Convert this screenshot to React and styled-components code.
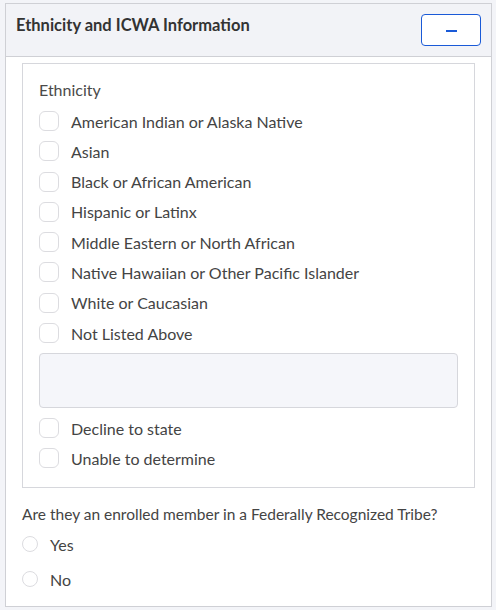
import React from "react";
import styled, { createGlobalStyle } from "styled-components";

const Global = createGlobalStyle`
  html, body { margin: 0; padding: 0; background: #f3f4f8; }
  body { font-family: Lato, "Open Sans", sans-serif; color: #444; }
  * { box-sizing: border-box; }
`;

const Page = styled.div`
  padding: 3px 4px 3px 5px;
`;

const Card = styled.section`
  border: 1px solid #cfd0d5;
  background: #fff;
  height: 604px;
  display: flex;
  flex-direction: column;
`;

const Header = styled.header`
  display: flex;
  align-items: flex-start;
  justify-content: space-between;
  height: 53px;
  padding: 10px 10px 0 10px;
  background: #f2f3f7;
  border-bottom: 1px solid #cfd0d5;
`;

const Title = styled.h2`
  margin: 0;
  font-size: 16.5px;
  line-height: 22px;
  font-weight: 700;
  color: #333;
`;

const CollapseButton = styled.button`
  width: 60px;
  height: 32px;
  background: #fff;
  border: 1px solid #1a5ad7;
  border-radius: 4px;
  display: flex;
  align-items: center;
  justify-content: center;
  padding: 0;
  cursor: pointer;
`;

const Minus = styled.span`
  display: block;
  width: 11px;
  height: 2px;
  background: #1a5ad7;
  margin-top: 1px;
`;

const Body = styled.div`
  padding: 6px 16px 0 16px;
`;

const Fieldset = styled.div`
  border: 1px solid #d6d7dc;
  padding: 16px;
  height: 425px;
`;

const GroupLabel = styled.div`
  font-size: 16px;
  line-height: 20px;
  color: #4a4a4a;
  margin-bottom: 11px;
`;

const CheckRow = styled.label`
  display: flex;
  align-items: center;
  gap: 12px;
  height: 20px;
  margin-bottom: ${(p) => (p.$last ? "0" : "10.3px")};
  font-size: 16px;
  color: #444;
`;

const Box = styled.span`
  width: 20px;
  height: 20px;
  flex: none;
  border: 1px solid #dcdce0;
  border-radius: 6px;
  background: #fff;
`;

const OtherText = styled.div`
  height: 55px;
  margin: 10px 0 10px 0;
  background: #f5f6fa;
  border: 1px solid #d6d7dc;
  border-radius: 4px;
`;

const Question = styled.div`
  margin: 16px 0 0 16px;
  font-size: 15.5px;
  line-height: 20px;
  color: #444;
`;

const RadioRow = styled.label`
  display: flex;
  align-items: center;
  gap: 12px;
  height: 16px;
  margin: ${(p) => (p.$first ? "12px" : "19px")} 0 0 16px;
  font-size: 16px;
  color: #444;
`;

const Circle = styled.span`
  width: 16px;
  height: 16px;
  flex: none;
  border: 1px solid #dcdce0;
  border-radius: 50%;
  background: #fff;
`;

const ethnicities = [
  "American Indian or Alaska Native",
  "Asian",
  "Black or African American",
  "Hispanic or Latinx",
  "Middle Eastern or North African",
  "Native Hawaiian or Other Pacific Islander",
  "White or Caucasian",
  "Not Listed Above",
];

export default function App() {
  return (
    <Page>
      <Global />
      <Card>
        <Header>
          <Title>Ethnicity and ICWA Information</Title>
          <CollapseButton aria-label="Collapse">
            <Minus />
          </CollapseButton>
        </Header>
        <Body>
          <Fieldset>
            <GroupLabel>Ethnicity</GroupLabel>
            {ethnicities.map((e, i) => (
              <CheckRow key={e} $last={i === ethnicities.length - 1}>
                <Box />
                {e}
              </CheckRow>
            ))}
            <OtherText />
            <CheckRow>
              <Box />
              Decline to state
            </CheckRow>
            <CheckRow $last>
              <Box />
              Unable to determine
            </CheckRow>
          </Fieldset>
        </Body>
        <Question>Are they an enrolled member in a Federally Recognized Tribe?</Question>
        <RadioRow $first>
          <Circle />
          Yes
        </RadioRow>
        <RadioRow>
          <Circle />
          No
        </RadioRow>
      </Card>
    </Page>
  );
}
